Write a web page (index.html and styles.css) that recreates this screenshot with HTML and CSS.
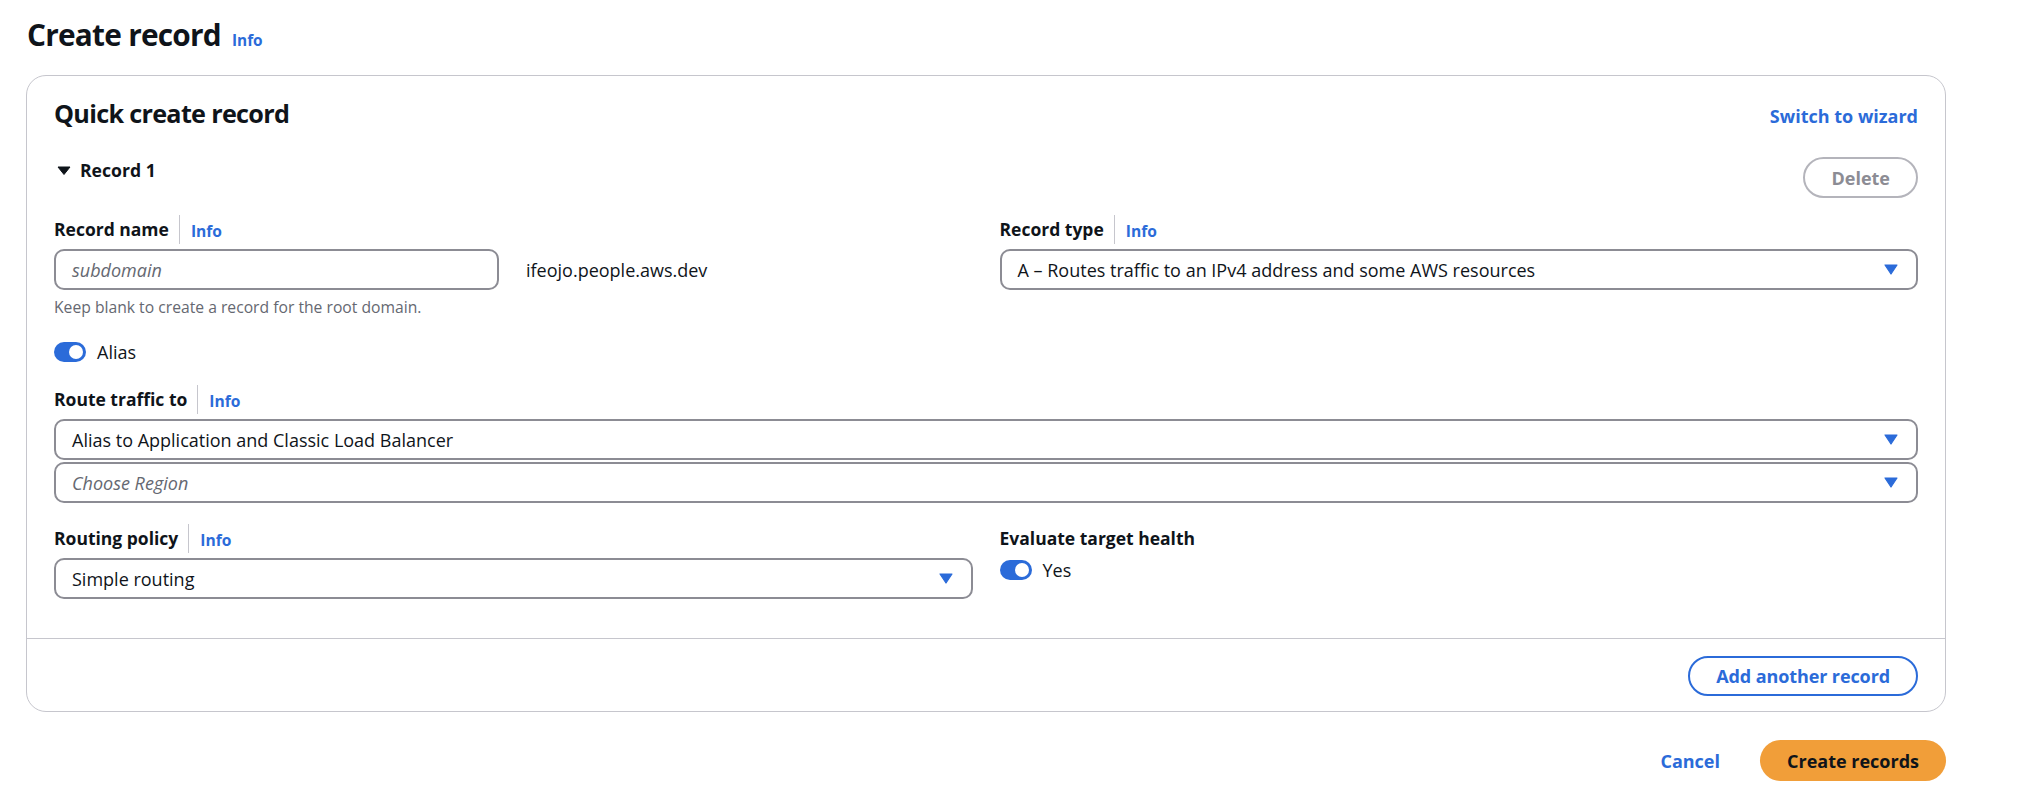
FILE: index.html
```html
<!DOCTYPE html>
<html lang="en">
<head>
<meta charset="utf-8">
<title>Create record</title>
<link rel="stylesheet" href="styles.css">
</head>
<body>
<div class="page">
  <h1 class="page-title"><span>Create record</span><a class="info">Info</a></h1>

  <div class="card">
    <div class="card-body">
      <div class="card-header">
        <h2 class="card-title">Quick create record</h2>
        <a class="link-strong">Switch to wizard</a>
      </div>

      <div class="record-head">
        <div class="expander">
          <svg class="caret" width="20" height="20" viewBox="0 0 20 20"><path d="M4 7 H16 L10 14.5 Z" fill="#0f141a" stroke="#0f141a" stroke-width="1" stroke-linejoin="round"/></svg>
          <span>Record 1</span>
        </div>
        <button class="btn btn-disabled" type="button">Delete</button>
      </div>

      <div class="fields">
        <div class="grid2">
          <div class="field">
            <div class="label"><span>Record name</span><span class="info-sep"><a class="info">Info</a></span></div>
            <div class="input-row">
              <div class="control input"><span class="placeholder">subdomain</span></div>
              <span class="suffix">ifeojo.people.aws.dev</span>
            </div>
            <div class="hint">Keep blank to create a record for the root domain.</div>
          </div>
          <div class="field">
            <div class="label"><span>Record type</span><span class="info-sep"><a class="info">Info</a></span></div>
            <div class="control select">
              <span>A – Routes traffic to an IPv4 address and some AWS resources</span>
              <svg class="arrow" width="14" height="11" viewBox="0 0 14 11"><path d="M1 1 H13 L7 10 Z" fill="#2b6bd9" stroke="#2b6bd9" stroke-width="1.2" stroke-linejoin="round"/></svg>
            </div>
          </div>
        </div>

        <div class="toggle-row"><span class="toggle"></span><span>Alias</span></div>

        <div class="field">
          <div class="label"><span>Route traffic to</span><span class="info-sep"><a class="info">Info</a></span></div>
          <div class="control select">
            <span>Alias to Application and Classic Load Balancer</span>
            <svg class="arrow" width="14" height="11" viewBox="0 0 14 11"><path d="M1 1 H13 L7 10 Z" fill="#2b6bd9" stroke="#2b6bd9" stroke-width="1.2" stroke-linejoin="round"/></svg>
          </div>
          <div class="control select stacked">
            <span class="placeholder">Choose Region</span>
            <svg class="arrow" width="14" height="11" viewBox="0 0 14 11"><path d="M1 1 H13 L7 10 Z" fill="#2b6bd9" stroke="#2b6bd9" stroke-width="1.2" stroke-linejoin="round"/></svg>
          </div>
        </div>

        <div class="grid2">
          <div class="field">
            <div class="label"><span>Routing policy</span><span class="info-sep"><a class="info">Info</a></span></div>
            <div class="control select">
              <span>Simple routing</span>
              <svg class="arrow" width="14" height="11" viewBox="0 0 14 11"><path d="M1 1 H13 L7 10 Z" fill="#2b6bd9" stroke="#2b6bd9" stroke-width="1.2" stroke-linejoin="round"/></svg>
            </div>
          </div>
          <div class="field">
            <div class="label"><span>Evaluate target health</span></div>
            <div class="toggle-row"><span class="toggle"></span><span>Yes</span></div>
          </div>
        </div>
      </div>
    </div>
    <div class="card-footer">
      <button class="btn btn-normal" type="button">Add another record</button>
    </div>
  </div>

  <div class="actions">
    <button class="btn btn-link" type="button">Cancel</button>
    <button class="btn btn-primary" type="button">Create records</button>
  </div>
</div>
</body>
</html>
```

FILE: styles.css
```css
* { box-sizing: border-box; }

html, body {
  margin: 0;
  background: #ffffff;
}

body {
  font-family: "Open Sans", "Noto Sans", "Liberation Sans", sans-serif;
  font-size: 18px;
  line-height: 24px;
  color: #0f141a;
}

.page {
  padding: 16px 86px 0 26px;
}

.page-title {
  margin: 0 0 0 1px;
  display: flex;
  align-items: baseline;
  gap: 11px;
  font-size: 29.8px;
  line-height: 38px;
  font-weight: 700;
  letter-spacing: -0.75px;
}

.info {
  color: #2b6bd9;
  font-size: 15.4px;
  font-weight: 700;
  letter-spacing: 0;
  line-height: 20px;
}

.card {
  margin-top: 21px;
  border: 1px solid #c6c6cd;
  border-radius: 20px;
  background: #ffffff;
}

.card-body {
  padding: 21px 27px 39px;
}

.card-header {
  display: flex;
  justify-content: space-between;
  align-items: baseline;
}

.card-title {
  margin: 0;
  font-size: 25.2px;
  line-height: 32px;
  font-weight: 700;
  letter-spacing: -0.7px;
}

.link-strong {
  color: #2b6bd9;
  font-weight: 700;
  font-size: 18px;
}

.record-head {
  margin-top: 28px;
  display: flex;
  justify-content: space-between;
  align-items: flex-start;
}

.expander {
  padding-top: 1px;
  display: flex;
  align-items: center;
  gap: 6px;
  font-weight: 700;
  font-size: 17.6px;
}

.caret { display: block; }

.btn {
  font-family: inherit;
  font-size: 18px;
  font-weight: 700;
  line-height: 24px;
  border-radius: 22px;
  background: #ffffff;
  cursor: pointer;
  display: inline-flex;
  align-items: center;
  justify-content: center;
}

.btn-disabled {
  height: 41px;
  padding: 0 26px;
  border: 2px solid #b4b4bb;
  color: #8c8c94;
}

.btn-normal {
  height: 40px;
  padding: 0 26px;
  border: 2px solid #2b6bd9;
  color: #2b6bd9;
  letter-spacing: -0.1px;
}

.btn-link {
  height: 41px;
  padding: 0 20px;
  border: none;
  background: transparent;
  color: #2b6bd9;
}

.btn-primary {
  height: 41px;
  padding: 0 27px;
  border: none;
  background: #f19e39;
  color: #0f141a;
}

.fields {
  margin-top: 19px;
  display: flex;
  flex-direction: column;
  gap: 23px;
}

.grid2 {
  display: grid;
  grid-template-columns: 1fr 1fr;
  column-gap: 27px;
}

.field {
  display: flex;
  flex-direction: column;
}

.label {
  display: flex;
  align-items: baseline;
  font-weight: 700;
  font-size: 17.5px;
  height: 24px;
  margin-bottom: 8px;
}

.info-sep {
  margin-left: 10px;
  padding-left: 11px;
  border-left: 1px solid #c6c6cd;
  display: inline-block;
  line-height: 26px;
  align-self: center;
}

.info-sep .info {
  font-size: 15.6px;
  line-height: 26px;
  display: inline-block;
  padding-top: 3px;
}

.control {
  height: 41px;
  border: 2px solid #8c8c94;
  border-radius: 10px;
  padding: 0 18px 0 16px;
  display: flex;
  align-items: center;
  justify-content: space-between;
  background: #ffffff;
}

.control.stacked {
  margin-top: 2px;
}

.arrow { display: block; flex: none; }

.placeholder {
  font-style: italic;
  color: #656871;
}

.input-row {
  display: flex;
  align-items: center;
  gap: 27px;
}

.input {
  width: 445px;
}

.hint {
  margin-top: 7px;
  font-size: 15.7px;
  line-height: 20px;
  color: #656871;
}

.toggle-row {
  display: flex;
  align-items: center;
  gap: 11px;
  height: 24px;
}

.toggle {
  position: relative;
  width: 32px;
  height: 20px;
  border-radius: 10px;
  background: #2b6bd9;
  flex: none;
}

.toggle::after {
  content: "";
  position: absolute;
  top: 3px;
  right: 3px;
  width: 14px;
  height: 14px;
  border-radius: 50%;
  background: #ffffff;
}

.card-footer {
  border-top: 1px solid #c6c6cd;
  padding: 17px 27px 15px;
  display: flex;
  justify-content: flex-end;
}

.actions {
  margin-top: 28px;
  display: flex;
  justify-content: flex-end;
  align-items: center;
  gap: 20px;
}
```
